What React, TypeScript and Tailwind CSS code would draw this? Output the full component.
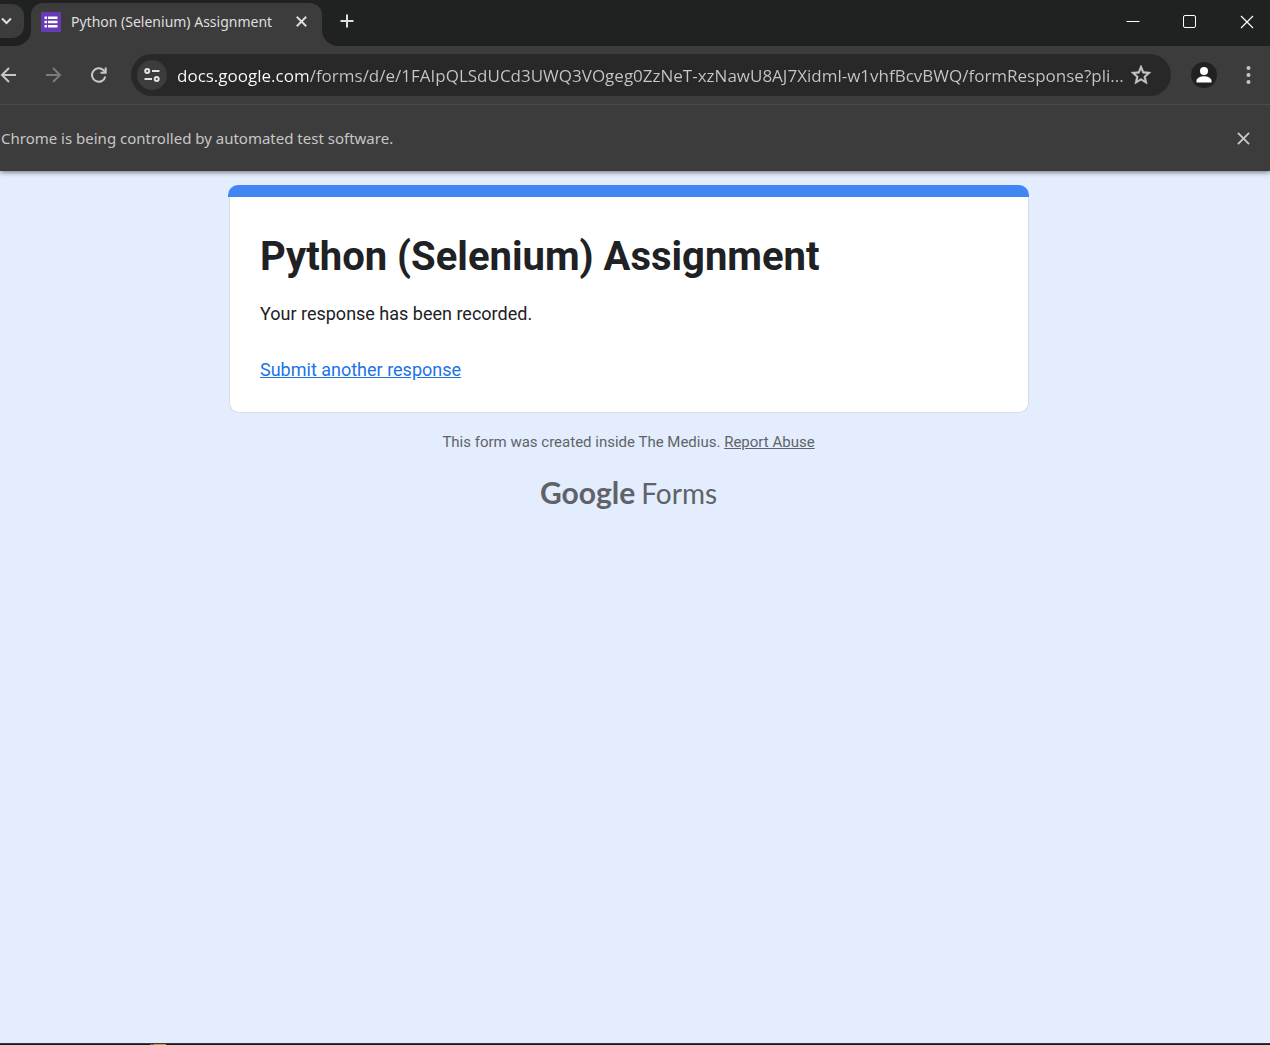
import React from "react";

const url =
  "docs.google.com/forms/d/e/1FAIpQLSdUCd3UWQ3VOgeg0ZzNeT-xzNawU8AJ7Xidml-w1vhfBcvBWQ/formResponse?pli...";

function CloseIcon({ size, stroke }: { size: number; stroke: number }) {
  return (
    <svg width={size} height={size} viewBox="0 0 14 14" fill="none" stroke="currentColor" strokeWidth={stroke} aria-hidden="true">
      <path d="M1 1l12 12M13 1L1 13" />
    </svg>
  );
}

function TabStrip() {
  return (
    <div className="flex h-[46px] items-stretch bg-[#202221] text-[#dfdfdf]">
      <div className="flex w-[31px] shrink-0 bg-[#3c3c3c]">
        <div className="flex w-full rounded-br-[16px] bg-[#202221]">
          <button aria-label="Search tabs" className="mt-1 flex h-[34px] w-6 items-center rounded-r-[12px] bg-[#3c3c3c]">
            <svg width="13" height="10" viewBox="0 0 13 10" fill="none" stroke="currentColor" strokeWidth="2" aria-hidden="true">
              <path d="M2 2.5l4.5 4.5L11 2.5" />
            </svg>
          </button>
        </div>
      </div>
      <div className="bg-[#202221] pt-[3px]">
        <div className="flex h-[43px] w-[291px] items-center rounded-t-[12px] bg-[#3c3c3c] pr-[14px] pb-[6px] pl-[10px]">
          <svg width="20" height="20" viewBox="0 0 20 20" className="shrink-0" aria-hidden="true">
            <rect width="20" height="20" rx="1" fill="#673ab7" />
            <path fill="#fff" d="M3.500 4.500h2.500v2.500H3.500zM7 4.500H16.500v2.500H7zM3.500 8.700h2.500v2.500H3.500zM7 8.700H16.500v2.500H7zM3.500 12.900h2.500v2.500H3.500zM7 12.900H16.500v2.500H7z" />
          </svg>
          <span className="ml-[10px] flex-1 font-['Noto_Sans',sans-serif] text-sm whitespace-nowrap">Python (Selenium) Assignment</span>
          <button aria-label="Close tab" className="flex size-[14px] items-center justify-center">
            <CloseIcon size={11} stroke={2.4} />
          </button>
        </div>
      </div>
      <div className="flex flex-1 bg-[#3c3c3c]">
        <div className="flex flex-1 items-start justify-between rounded-bl-[16px] bg-[#202221]">
          <button aria-label="New tab" className="mt-[14px] ml-[18px]">
            <svg width="14" height="14" viewBox="0 0 14 14" stroke="currentColor" strokeWidth="2" aria-hidden="true">
              <path d="M7 0.500v13M0.500 7h13" />
            </svg>
          </button>
          <div className="mt-[15px] mr-4 flex gap-[43px] text-white">
            <button aria-label="Minimize">
              <svg width="14" height="14" viewBox="0 0 14 14" stroke="currentColor" aria-hidden="true">
                <path d="M0.500 6.500h13" />
              </svg>
            </button>
            <button aria-label="Maximize">
              <svg width="14" height="14" viewBox="0 0 14 14" fill="none" stroke="currentColor" aria-hidden="true">
                <rect x="0.500" y="0.500" width="12" height="12" rx="1.500" />
              </svg>
            </button>
            <button aria-label="Close window">
              <CloseIcon size={14} stroke={1.2} />
            </button>
          </div>
        </div>
      </div>
    </div>
  );
}

function Toolbar() {
  return (
    <div className="flex h-[58px] items-center bg-[#3c3c3c] text-[#c7c7c7]">
      <button aria-label="Back" className="shrink-0">
        <svg width="17" height="16" viewBox="0 0 17 16" fill="none" stroke="currentColor" strokeWidth="2" aria-hidden="true">
          <path d="M16 8H2.500M9 1L2 8l7 7" />
        </svg>
      </button>
      <button aria-label="Forward" className="ml-7 shrink-0 text-[#7b7b7b]">
        <svg width="17" height="16" viewBox="0 0 17 16" fill="none" stroke="currentColor" strokeWidth="2" aria-hidden="true">
          <path d="M1 8h13.500M8 1l7 7-7 7" />
        </svg>
      </button>
      <button aria-label="Reload" className="ml-7 shrink-0">
        <svg width="17" height="16" viewBox="0 0 17 16" fill="none" stroke="currentColor" strokeWidth="2" aria-hidden="true">
          <path d="M15.300 9.500A6.700 6.700 0 1 1 13.500 3.300L15 5" />
          <path d="M15.700 0.500V5.700H10.500" />
        </svg>
      </button>
      <div className="ml-6 flex h-[42px] min-w-0 flex-1 items-center rounded-full bg-[#282828] pr-5 pl-[6px]">
        <button aria-label="View site information" className="flex size-[30px] shrink-0 items-center justify-center rounded-full bg-[#3c3c3c] text-[#e3e3e3]">
          <svg width="16" height="14" viewBox="0 0 16 14" fill="none" stroke="currentColor" strokeWidth="2" aria-hidden="true">
            <circle cx="3.200" cy="3" r="2" />
            <path d="M8 3h7.500M0.500 11H8" />
            <circle cx="12.700" cy="11" r="2" />
          </svg>
        </button>
        <input
          aria-label="Address and search bar"
          readOnly
          value={url}
          className="ml-[10px] h-8 min-w-0 flex-1 bg-[linear-gradient(90deg,#ffffff_131px,#c7c7c7_131px)] bg-clip-text text-[17px] text-transparent outline-none"
        />
        <button aria-label="Bookmark this page" className="shrink-0">
          <svg width="20" height="20" viewBox="2 2 20 20" fill="currentColor" stroke="currentColor" strokeWidth="0.5" aria-hidden="true">
            <path d="M22 9.240l-7.190-.62L12 2 9.190 8.630 2 9.240l5.460 4.730L5.820 21 12 17.270 18.180 21l-1.630-7.030L22 9.240zM12 15.400l-3.760 2.270 1-4.280-3.320-2.880 4.380-.38L12 6.100l1.710 4.040 4.380.38-3.320 2.880 1 4.280L12 15.400z" />
          </svg>
        </button>
      </div>
      <button aria-label="Profile" className="ml-5 flex size-[26px] shrink-0 items-center justify-center rounded-full bg-[#202221] text-white">
        <svg width="16" height="16" viewBox="0 0 16 16" fill="currentColor" aria-hidden="true">
          <circle cx="8" cy="4" r="4" />
          <path d="M0.500 15.500v-2c0-2.700 5-4.200 7.500-4.200s7.500 1.500 7.500 4.200v2z" />
        </svg>
      </button>
      <button aria-label="Chrome menu" className="mr-[19px] ml-[29px] shrink-0">
        <svg width="5" height="18" viewBox="0 0 5 18" fill="currentColor" aria-hidden="true">
          <circle cx="2.500" cy="2" r="2" />
          <circle cx="2.500" cy="9" r="2" />
          <circle cx="2.500" cy="16" r="2" />
        </svg>
      </button>
    </div>
  );
}

export default function App() {
  return (
    <div className="flex min-h-screen flex-col bg-[#e3edfd] font-['Open_Sans','Noto_Sans',sans-serif]">
      <header className="shadow-[0_1px_5px_rgba(0,0,0,0.55)]">
        <TabStrip />
        <Toolbar />
        <div className="flex h-[67px] items-center justify-between border-t border-[#4a4a4a] bg-[#3c3c3c] pr-5 pl-px text-[#c7c7c7]">
          <p className="font-['Noto_Sans',sans-serif] text-[15px]">Chrome is being controlled by automated test software.</p>
          <button aria-label="Dismiss">
            <CloseIcon size={13} stroke={2} />
          </button>
        </div>
      </header>

      <main className="flex flex-1 flex-col items-center pt-[14px] pr-[13px] font-[Roboto,sans-serif]">
        <section className="w-full max-w-[801px]">
          <div className="h-3 rounded-t-[10px] bg-[#4285f4]" />
          <div className="ml-px rounded-b-[10px] border border-t-0 border-[#dadce0] bg-white px-[30px] pt-[35px] pb-7 text-[18px] leading-7 text-[#202124]">
            <h1 className="text-[40px] leading-[50px] font-bold">Python (Selenium) Assignment</h1>
            <p className="mt-[18px]">Your response has been recorded.</p>
            <p className="mt-7">
              <a href="#another" className="text-[#1a73e8] underline">Submit another response</a>
            </p>
          </div>
        </section>
        <p className="mt-[18px] text-[15px] leading-[22px] text-[#5f6368]">
          This form was created inside The Medius. <a href="#report" className="underline">Report Abuse</a>
        </p>
        <a href="#forms" aria-label="Google Forms" className="mt-[21px] flex items-baseline gap-[6px] font-[Lato,sans-serif] text-[28px] leading-9 text-[#5f6368]">
          <span className="text-[30px] font-bold">Google</span>
          <span>Forms</span>
        </a>
      </main>

      <footer className="flex h-[2px] overflow-hidden border-t border-[#3a3a3c] bg-[#1b191c]">
        <div className="ml-[150px] h-px w-1 bg-[#3b6e96]" />
        <div className="h-px w-3 bg-[#c9a227]" />
      </footer>
    </div>
  );
}
